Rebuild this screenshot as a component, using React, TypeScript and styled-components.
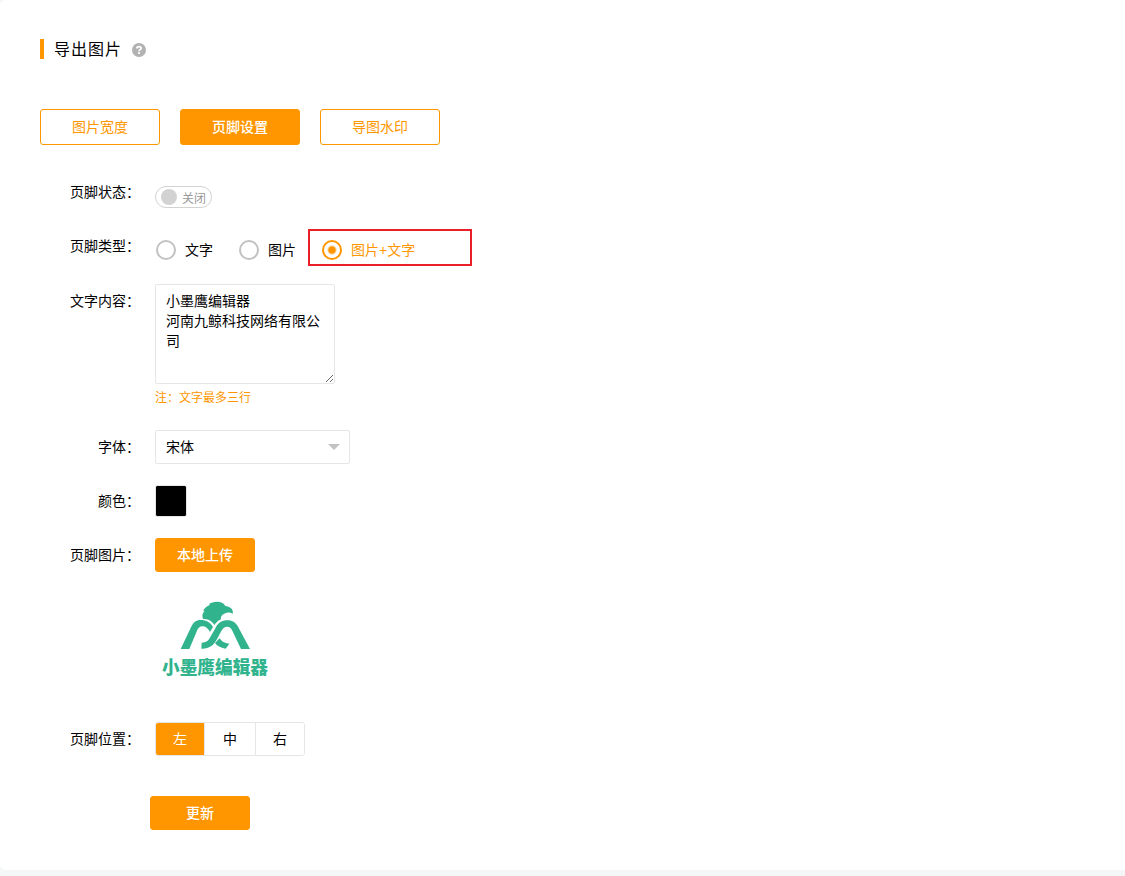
import React, { useState } from "react";
import styled, { createGlobalStyle } from "styled-components";

const accent = "#ff9600";
const line = "#e6e6e6";

const GlobalStyle = createGlobalStyle`
  *, *::before, *::after { box-sizing: border-box; }
  html { background: #f5f6f7; }
  body {
    margin: 0;
    color: #000;
    font: 14px/20px "Liberation Sans", "Noto Sans CJK SC", sans-serif;
  }
  button, input, select, textarea { font: inherit; color: inherit; margin: 0; }
`;

const Card = styled.main`
  padding: 39px 40px 40px;
  background: #fff;
  border-radius: 6px 0 0 6px;
`;

const Header = styled.header`
  display: flex;
  align-items: center;
  gap: 10px;
  margin-bottom: 50px;
`;

const Title = styled.h1`
  margin: 0;
  padding: 2px 0 0 10px;
  border-left: 4px solid ${accent};
  font-size: 16px;
  font-weight: 400;
  line-height: 18px;
  letter-spacing: 1px;
`;

const HelpButton = styled.button`
  display: flex;
  padding: 2px 0 0;
  border: 0;
  background: none;
`;

const Tabs = styled.nav`
  display: flex;
  gap: 20px;
  margin-bottom: 30px;
`;

const Button = styled.button<{ $filled?: boolean; $width?: number; $height?: number }>`
  width: ${(p) => p.$width ?? 100}px;
  height: ${(p) => p.$height ?? 34}px;
  padding: 0;
  border: 1px solid ${accent};
  border-radius: 3px;
  background: ${(p) => (p.$filled ? accent : "#fff")};
  color: ${(p) => (p.$filled ? "#fff" : accent)};
  font-weight: ${(p) => (p.$filled ? 500 : 400)};
  cursor: pointer;
`;

const Form = styled.form`
  display: flex;
  flex-direction: column;
  gap: 20px;
`;

const Row = styled.div`
  display: grid;
  grid-template-columns: 100px 1fr;
  column-gap: 15px;
  min-height: 34px;
`;

const Label = styled.label`
  padding: 7px 0;
  text-align: right;
`;

const Control = styled.div<{ $top?: number }>`
  display: flex;
  flex-direction: column;
  align-items: flex-start;
  padding-top: ${(p) => p.$top ?? 0}px;
`;

const Switch = styled.button`
  display: flex;
  align-items: center;
  gap: 5px;
  width: 57px;
  height: 22px;
  padding: 0 5px;
  border: 1px solid #d2d2d2;
  border-radius: 11px;
  background: #fff;
  color: #999;
  font-size: 12px;
  white-space: nowrap;

  &::before {
    content: "";
    flex: none;
    width: 16px;
    height: 16px;
    border-radius: 50%;
    background: #d2d2d2;
  }
`;

const SwitchText = styled.span`
  padding-top: 3px;
`;

const RadioRow = styled.div`
  display: flex;
  gap: 26px;
  padding: 11px 0 4px 1px;
`;

const RadioOption = styled.label<{ $active: boolean; $framed?: boolean }>`
  position: relative;
  display: flex;
  align-items: center;
  gap: 9px;
  color: ${(p) => (p.$active ? accent : "#000")};

  &::after {
    content: "";
    display: ${(p) => (p.$framed ? "block" : "none")};
    position: absolute;
    top: -11px;
    left: -14px;
    width: 164px;
    height: 37px;
    border: 2px solid #e9202a;
    pointer-events: none;
  }
`;

const Radio = styled.input`
  appearance: none;
  width: 20px;
  height: 20px;
  border: 2px solid #c2c2c2;
  border-radius: 50%;

  &:checked {
    border-color: ${accent};
    background: radial-gradient(circle, ${accent} 3px, transparent 5px);
  }
`;

const TextArea = styled.textarea`
  display: block;
  width: 180px;
  height: 100px;
  padding: 6px 10px;
  border: 1px solid ${line};
  border-radius: 2px;
  background: #fff;
  line-height: 20px;
`;

const Note = styled.p`
  margin: 4px 0 2px;
  color: ${accent};
  font-size: 12px;
  line-height: 20px;
`;

const SelectBox = styled.div`
  position: relative;

  svg {
    position: absolute;
    top: 14px;
    right: 10px;
    pointer-events: none;
  }
`;

const Select = styled.select`
  display: block;
  appearance: none;
  width: 195px;
  height: 34px;
  padding: 0 10px;
  border: 1px solid ${line};
  border-radius: 2px;
  background: #fff;
`;

const Swatch = styled.input`
  appearance: none;
  width: 32px;
  height: 32px;
  padding: 0;
  border: 1px solid ${line};
  border-radius: 2px;
  background: none;

  &::-webkit-color-swatch-wrapper { padding: 0; }
  &::-webkit-color-swatch { border: 0; border-radius: 1px; }
`;

const Logo = styled.svg`
  display: block;
  margin: 20px 0;
`;

const Segments = styled.div`
  display: grid;
  grid-template-columns: 48px 51px 1fr;
  width: 150px;
  height: 34px;
  border: 1px solid ${line};
  border-radius: 3px;
  overflow: hidden;
`;

const Segment = styled.button<{ $active: boolean }>`
  padding: 0;
  border: 0;
  background: ${(p) => (p.$active ? accent : "#fff")};
  color: ${(p) => (p.$active ? "#fff" : "#000")};

  & + & { border-left: 1px solid ${line}; }
`;

const Actions = styled.div`
  padding: 20px 0 0 110px;
`;

const types = ["文字", "图片", "图片+文字"];
const positions = ["左", "中", "右"];
const tabs = ["图片宽度", "页脚设置", "导图水印"];

function EagleLogo() {
  return (
    <Logo width="120" height="90" viewBox="15 6 360 270" fill="#31b48d" role="img" aria-label="小墨鹰编辑器">
      <path d="M159 87C155 76 158 68 164 62L159 63C164 52 172 48 181 44L176 43C188 34 217 30 226 48C239 50 252 57 248 72C243 66 231 66 223 71C215 75 211 81 213 88C204 92 198 98 193 105C187 95 176 86 159 87Z" />
      <path d="M92 177L123 112C130 97 138 90 152 90C169 90 181 97 189 111L180 126C174 115 167 109 157 109C149 109 145 114 141 122L118 177Z" />
      <path d="M154 176L155 158C169 158 175 152 181 141L197 113C205 98 216 91 232 91C248 91 258 98 265 112L300 177H273L247 122C243 114 239 110 232 110C224 110 219 114 214 123L199 151C190 167 177 177 154 176Z" />
      <path d="M209 145C214 154 224 160 238 161L227 176C211 173 201 168 195 159Z" />
      <text x="36" y="253" fontFamily="Noto Sans CJK SC, sans-serif" fontSize="53" fontWeight="900">小墨鹰编辑器</text>
    </Logo>
  );
}

export default function App() {
  const [tab, setTab] = useState(1);
  const [enabled, setEnabled] = useState(false);
  const [type, setType] = useState(2);
  const [position, setPosition] = useState(0);

  return (
    <>
      <GlobalStyle />
      <Card>
        <Header>
          <Title>导出图片</Title>
          <HelpButton type="button" aria-label="帮助">
            <svg width="14" height="14" viewBox="0 0 14 14">
              <circle cx="7" cy="7" r="7" fill="#b2b2b2" />
              <path d="M4.9 5.5C4.9 4.2 5.8 3.6 7 3.6S9.1 4.3 9.1 5.3C9.1 6.6 7.1 6.7 7.1 8.2" fill="none" stroke="#fff" strokeWidth="1.8" />
              <rect x="6.1" y="9.1" width="1.9" height="1.8" fill="#fff" />
            </svg>
          </HelpButton>
        </Header>
        <Tabs>
          {tabs.map((name, i) => (
            <Button key={name} type="button" $width={120} $height={36} $filled={tab === i} onClick={() => setTab(i)}>
              {name}
            </Button>
          ))}
        </Tabs>
        <Form onSubmit={(e) => e.preventDefault()}>
          <Row>
            <Label htmlFor="status">页脚状态：</Label>
            <Control $top={11}>
              <Switch id="status" type="button" role="switch" aria-checked={enabled} onClick={() => setEnabled(!enabled)}>
                <SwitchText>{enabled ? "开启" : "关闭"}</SwitchText>
              </Switch>
            </Control>
          </Row>
          <Row role="radiogroup" aria-labelledby="type-label">
            <Label as="span" id="type-label">页脚类型：</Label>
            <RadioRow>
              {types.map((name, i) => (
                <RadioOption key={name} $active={type === i} $framed={i === 2}>
                  <Radio type="radio" name="type" checked={type === i} onChange={() => setType(i)} />
                  {name}
                </RadioOption>
              ))}
            </RadioRow>
          </Row>
          <Row>
            <Label htmlFor="content">文字内容：</Label>
            <Control>
              <TextArea id="content" spellCheck={false} defaultValue={"小墨鹰编辑器\n河南九鲸科技网络有限公司"} />
              <Note>注：文字最多三行</Note>
            </Control>
          </Row>
          <Row>
            <Label htmlFor="font">字体：</Label>
            <Control>
              <SelectBox>
                <Select id="font">
                  <option>宋体</option>
                </Select>
                <svg width="12" height="6" viewBox="0 0 12 6">
                  <path d="M0 0H12L6 6Z" fill="#c2c2c2" />
                </svg>
              </SelectBox>
            </Control>
          </Row>
          <Row>
            <Label htmlFor="color">颜色：</Label>
            <Control $top={1}>
              <Swatch id="color" type="color" defaultValue="#000000" />
            </Control>
          </Row>
          <Row>
            <Label htmlFor="upload">页脚图片：</Label>
            <Control>
              <Button id="upload" type="button" $filled>本地上传</Button>
              <EagleLogo />
            </Control>
          </Row>
          <Row role="group" aria-labelledby="position-label">
            <Label as="span" id="position-label">页脚位置：</Label>
            <Control>
              <Segments>
                {positions.map((name, i) => (
                  <Segment key={name} type="button" $active={position === i} aria-pressed={position === i} onClick={() => setPosition(i)}>
                    {name}
                  </Segment>
                ))}
              </Segments>
            </Control>
          </Row>
          <Actions>
            <Button type="submit" $filled>更新</Button>
          </Actions>
        </Form>
      </Card>
    </>
  );
}
